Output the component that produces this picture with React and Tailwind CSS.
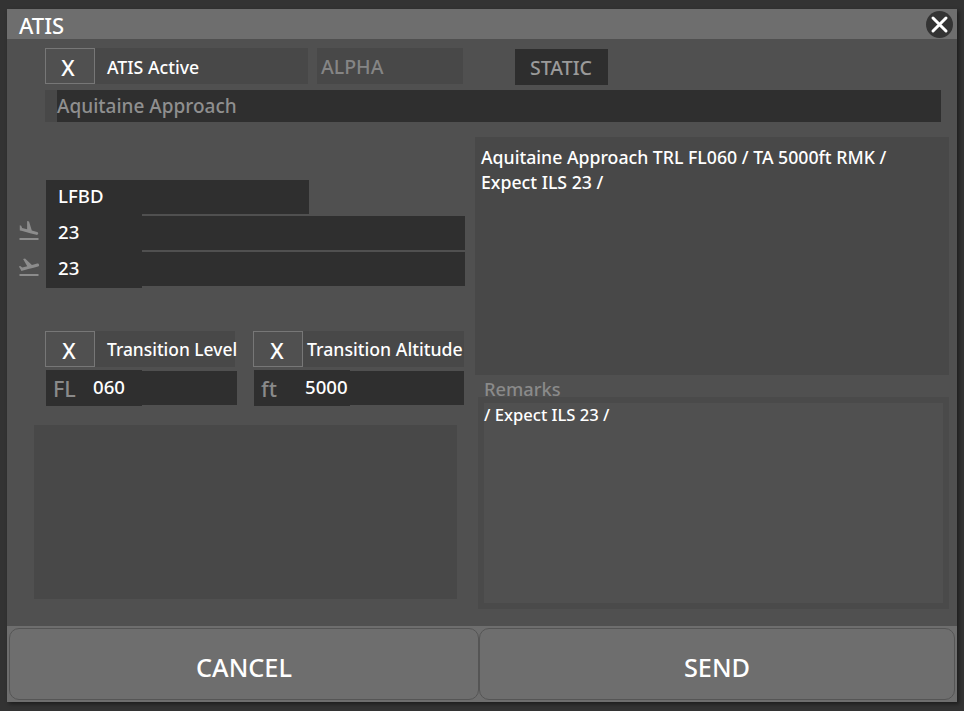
function Check({ pad }) {
  return (
    <div className={`w-[50px] h-[36px] shrink-0 border border-[#777777] flex items-center justify-center pt-[3px] text-[22px] text-white ${pad}`}>X</div>
  );
}

function Field({ label, labelWidth = 'w-[40px]', value, width }) {
  return (
    <div className={`flex ${label ? 'items-center' : 'items-start'} ${width}`}>
      <div className={`w-[96px] h-[36px] shrink-0 bg-[#2f2f2f] flex items-center text-white text-[18.6px] ${label ? 'pl-[7px] pb-[3px]' : 'pl-[12px] pb-[5px]'}`}>
        {label && <span className={`${labelWidth} shrink-0 text-[21.5px] text-[#8a8a8a] pt-[5px]`}>{label}</span>}
        {value}
      </div>
      <div className="flex-1 h-[34px] bg-[#2f2f2f]" />
    </div>
  );
}

function LandIcon() {
  return (
    <svg width="24" height="24" viewBox="0 0 24 24" fill="#8c8c8c" className="shrink-0">
      <path d="M2.5 19h19v2h-19zm7.18-5.73l4.35 1.16 5.31 1.42c.8.21 1.62-.26 1.84-1.06.21-.8-.26-1.62-1.06-1.84l-5.31-1.42-2.76-9.02L10.12 2v8.28L5.15 8.95l-.93-2.32-1.45-.39v5.17l1.6.43 5.31 1.43z" />
    </svg>
  );
}

function TakeoffIcon() {
  return (
    <svg width="24" height="24" viewBox="0 0 24 24" fill="#8c8c8c" className="shrink-0">
      <path d="M2.5 19h19v2h-19zm19.57-9.36c-.21-.8-1.04-1.28-1.84-1.06L14.92 10l-6.9-6.43-1.93.51 4.14 7.17-4.97 1.33-1.97-1.54-1.45.39 1.82 3.16.77 1.33 1.6-.43 5.31-1.42 4.35-1.16L21 11.49c.81-.23 1.28-1.05 1.07-1.85z" />
    </svg>
  );
}

export default function App() {
  return (
    <div className="w-[964px] h-[711px] bg-[#333333] pt-[9px] pl-[7px] font-['Noto_Sans',sans-serif] text-[17.7px] font-medium overflow-hidden">
      <div className="w-[950px] h-[693px] bg-[#505050] flex flex-col shadow-[2px_2px_4px_rgba(0,0,0,0.45)]">
        {/* title */}
        <div className="h-[30px] shrink-0 bg-[#6e6e6e] flex items-center justify-between pl-[12px] pr-[4px]">
          <span className="text-[22px] text-white pt-[3px]">ATIS</span>
          <button className="w-[27px] h-[27px] rounded-full bg-[#333333] flex items-center justify-center">
            <svg width="19" height="19" viewBox="0 0 19 19" stroke="white" strokeWidth="3" strokeLinecap="round">
              <path d="M3 3l13 13M16 3L3 16" />
            </svg>
          </button>
        </div>

        {/* body */}
        <div className="flex-1 min-h-0 pt-[9px]">
          <div className="flex items-start pl-[38px]">
            <Check pad="pr-[4px]" />
            <div className="w-[213px] h-[36px] bg-[#484848] flex items-center pl-[12px] pt-[3px] text-white">ATIS Active</div>
            <div className="w-[146px] h-[36px] ml-[9px] bg-[#484848] flex items-center pl-[4px] pt-[1px] text-[#858585] text-[19.5px]">ALPHA</div>
            <div className="w-[93px] h-[36px] ml-[52px] mt-px bg-[#2e2e2e] flex items-center justify-center pt-[2px] pr-[1px] text-[#9a9a9a] text-[19.5px]">STATIC</div>
          </div>

          <div className="flex h-[32px] mt-[5px] ml-[38px] w-[896px]">
            <div className="w-[12px] bg-[#484848]" />
            <div className="flex-1 bg-[#2f2f2f] flex items-center text-[#8f8f8f] text-[19px]">Aquitaine Approach</div>
          </div>

          <div className="flex mt-[15px]">
            {/* left column */}
            <div className="w-[468px] shrink-0">
              <div className="pt-[43px]">
                <div className="ml-[39px]">
                  <Field value="LFBD" width="w-[263px] h-[36px]" />
                </div>
                <div className="flex items-start pl-[10px] gap-[5px]">
                  <div className="pt-[3px]"><LandIcon /></div>
                  <Field value="23" width="w-[419px] h-[36px]" />
                </div>
                <div className="flex items-start pl-[10px] gap-[5px]">
                  <div className="pt-[3px]"><TakeoffIcon /></div>
                  <Field value="23" width="w-[419px] h-[36px]" />
                </div>
              </div>

              <div className="flex pt-[43px] pl-[38px]">
                <div className="w-[192px]">
                  <div className="flex">
                    <Check pad="pr-[2px]" />
                    <div className="w-[140px] h-[36px] bg-[#484848] flex items-center pl-[12px] text-white text-[17.4px] whitespace-nowrap">Transition Level</div>
                  </div>
                  <div className="mt-[3px] ml-px">
                    <Field label="FL" value="060" width="w-[191px]" />
                  </div>
                </div>
                <div className="w-[211px] ml-[16px]">
                  <div className="flex">
                    <Check pad="pr-[2px]" />
                    <div className="w-[161px] h-[36px] bg-[#484848] flex items-center pl-[4px] text-white whitespace-nowrap">Transition Altitude</div>
                  </div>
                  <div className="mt-[3px] ml-px">
                    <Field label="ft" labelWidth="w-[44px]" value="5000" width="w-[210px]" />
                  </div>
                </div>
              </div>

              <div className="ml-[27px] mt-[19px] w-[423px] h-[174px] bg-[#484848]" />
            </div>

            {/* right column */}
            <div className="w-[474px] shrink-0">
              <div className="h-[238px] bg-[#484848] pl-[6px] pt-[8px] text-white leading-[25px]">
                <p>Aquitaine Approach TRL FL060 / TA 5000ft RMK /</p>
                <p>Expect ILS 23 /</p>
              </div>
              <div className="h-[22px] pl-[9px] flex items-center pt-[6px] text-[18.3px] text-[#8a8a8a]">Remarks</div>
              <div className="ml-[3px] h-[212px] bg-[#505050] border-[6px] border-[#4a4a4a] text-white text-[16.6px] leading-[23px]">/ Expect ILS 23 /</div>
            </div>
          </div>
        </div>

        {/* footer */}
        <div className="h-[76px] shrink-0 bg-[#6e6e6e] flex px-[2px] py-[2px]">
          <button className="w-[470px] rounded-[10px] border border-[#555555] text-white text-[25.3px] flex items-center justify-center pt-[7px]">CANCEL</button>
          <button className="w-[476px] rounded-[10px] border border-[#555555] text-white text-[25.3px] flex items-center justify-center pt-[7px]">SEND</button>
        </div>
      </div>
    </div>
  );
}
